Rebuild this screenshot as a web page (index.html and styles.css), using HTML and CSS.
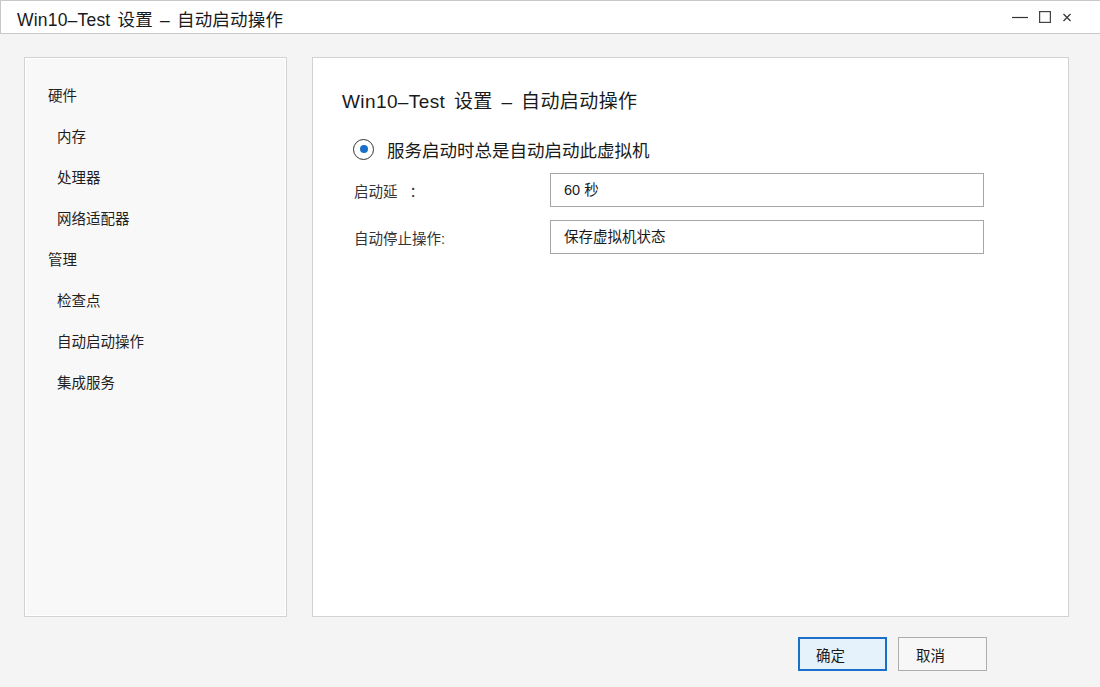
FILE: index.html
```html
<!DOCTYPE html>
<html lang="zh-CN">
<head>
    <meta charset="UTF-8">
    <title>Win10-Test 设置 - 自动启动操作</title>
    <link rel="stylesheet" href="styles.css">
</head>
<body>
    <div class="titlebar">
        <span class="title">Win10–Test 设置 – 自动启动操作</span>
        <div class="controls">
            <svg class="ctl" width="16" height="12" viewBox="0 0 16 12"><line x1="0" y1="6.5" x2="16" y2="6.5" stroke="#333" stroke-width="1.2"/></svg>
            <svg class="ctl" width="12" height="12" viewBox="0 0 12 12"><rect x="0.6" y="0.6" width="10.8" height="10.8" fill="none" stroke="#444" stroke-width="1.2"/></svg>
            <svg class="ctl" width="10" height="12" viewBox="0 0 10 12"><path d="M1.5 3 L8.5 10 M8.5 3 L1.5 10" stroke="#333" stroke-width="1.2"/></svg>
        </div>
    </div>

    <div class="main">
        <div class="sidebar">
            <div class="nav-group">硬件</div>
            <div class="nav-item">内存</div>
            <div class="nav-item">处理器</div>
            <div class="nav-item">网络适配器</div>
            <div class="nav-group">管理</div>
            <div class="nav-item">检查点</div>
            <div class="nav-item">自动启动操作</div>
            <div class="nav-item">集成服务</div>
        </div>

        <div class="content">
            <h2 class="heading">Win10–Test 设置 – 自动启动操作</h2>
            <label class="radio-row">
                <span class="radio"><span class="dot"></span></span>
                <span>服务启动时总是自动启动此虚拟机</span>
            </label>
            <div class="form-row">
                <span class="label">启动延&nbsp;&nbsp;&nbsp;：</span>
                <div class="field">60 秒</div>
            </div>
            <div class="form-row">
                <span class="label">自动停止操作:</span>
                <div class="field">保存虚拟机状态</div>
            </div>
        </div>
    </div>

    <div class="footer">
        <button class="btn primary">确定</button>
        <button class="btn">取消</button>
    </div>
</body>
</html>
```

FILE: styles.css
```css
body {
    margin: 0;
    width: 1100px;
    height: 687px;
    overflow: hidden;
    background: #f4f4f4;
    color: #1c1c1c;
    font-family: "Liberation Sans", "Noto Sans CJK SC", sans-serif;
}

.titlebar {
    height: 32px;
    background: #fff;
    border-top: 1px solid #c8c8c8;
    border-left: 1px solid #c8c8c8;
    border-bottom: 1px solid #c8c8c8;
    display: flex;
    align-items: center;
    justify-content: space-between;
    padding: 0 28px 0 16px;
}

.title {
    font-size: 17.5px;
    letter-spacing: 0.2px;
    word-spacing: 2px;
    color: #1a1a1a;
    padding-top: 2px;
}

.controls {
    display: flex;
    align-items: center;
    gap: 11px;
}

.ctl {
    display: block;
}

.main {
    display: flex;
    gap: 25px;
    padding: 23px 0 0 24px;
}

.sidebar {
    width: 261px;
    height: 540px;
    background: #f8f8f8;
    border: 1px solid #d2d2d2;
    box-shadow: inset 0 0 0 1px #fff;
    padding-top: 18px;
}

.nav-group,
.nav-item {
    height: 41px;
    line-height: 41px;
    font-size: 14.5px;
    color: #1f1f1f;
}

.nav-group {
    padding-left: 23px;
}

.nav-item {
    padding-left: 32px;
}

.content {
    width: 726px;
    height: 528px;
    background: #fff;
    border: 1px solid #d2d2d2;
    padding: 30px 0 0 29px;
}

.heading {
    margin: 0;
    font-size: 19px;
    font-weight: normal;
    letter-spacing: 0.4px;
    word-spacing: 3px;
    line-height: 26px;
    color: #1a1a1a;
    padding-top: 1px;
}

.radio-row {
    display: flex;
    align-items: center;
    height: 24px;
    margin: 22px 0 12px 11px;
    font-size: 17.5px;
    color: #1a1a1a;
}

.radio {
    width: 19px;
    height: 19px;
    border: 1px solid #333;
    border-radius: 50%;
    display: flex;
    align-items: center;
    justify-content: center;
    margin-right: 13px;
}

.dot {
    width: 8px;
    height: 8px;
    border-radius: 50%;
    background: #1a6fc9;
}

.form-row {
    display: flex;
    align-items: center;
    margin-bottom: 13px;
    padding-left: 12px;
    font-size: 14.5px;
}

.label {
    width: 196px;
    color: #333;
}

.field {
    width: 419px;
    height: 32px;
    line-height: 32px;
    border: 1px solid #a6a6a6;
    padding-left: 13px;
    color: #1a1a1a;
}

.footer {
    display: flex;
    justify-content: flex-end;
    gap: 11px;
    padding: 20px 113px 0 0;
}

.btn {
    width: 89px;
    height: 34px;
    font-family: "Liberation Sans", "Noto Sans CJK SC", sans-serif;
    font-size: 14.5px;
    text-align: left;
    padding: 0 0 0 17px;
    background: #f7f7f7;
    border: 1px solid #adadad;
    color: #1a1a1a;
}

.btn.primary {
    background: #e5f1fb;
    border: 2px solid #1a6fc9;
    padding-left: 16px;
}
```
